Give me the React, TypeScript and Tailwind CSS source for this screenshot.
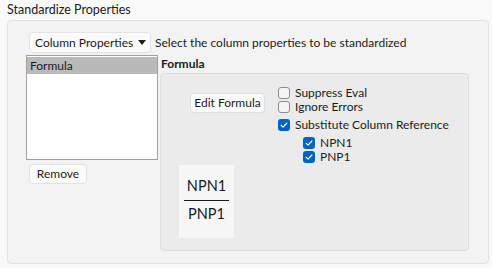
const font = { fontFamily: 'Lato, "Noto Sans", sans-serif' };

function Check({ checked, label, className = '' }: { checked?: boolean; label: string; className?: string }) {
  return (
    <div className={`flex h-[14px] items-center gap-[5px] whitespace-nowrap ${className}`}>
      {checked ? (
        <span className="flex h-[12px] w-[12px] shrink-0 items-center justify-center rounded-[3px] bg-[#0063c4]">
          <svg viewBox="0 0 12 12" className="h-[10px] w-[10px]">
            <path d="M2.5 6.3 L4.9 8.5 L9.5 3.6" fill="none" stroke="white" strokeWidth="1.4" strokeLinecap="round" strokeLinejoin="round" />
          </svg>
        </span>
      ) : (
        <span className="h-[12px] w-[12px] shrink-0 rounded-[3px] border border-[#8c8c8c] bg-[#f4f4f4]" />
      )}
      <span className="text-[12px] leading-[14px] text-[#1b1b1b]">{label}</span>
    </div>
  );
}

export default function App() {
  return (
    <div className="h-[268px] w-[492px] overflow-hidden whitespace-nowrap bg-[#f9f9f9] text-[12px] text-[#1b1b1b]" style={font}>
      {/* Title */}
      <div className="h-[20px] pl-[7px] text-[12.5px] leading-[20px]">Standardize Properties</div>

      {/* Outer panel */}
      <div className="ml-[7px] h-[244px] w-[482px] rounded-[4px] border border-[#e2e2e2] bg-[#f3f3f3]">
        <div className="flex items-center gap-[4px] pl-[21px] pt-[11px]">
          <button className="flex h-[21px] w-[122px] items-center justify-between rounded-[4px] border border-[#e3e3e3] bg-[#fbfbfb] pl-[5px] pr-[4px]">
            Column Properties
            <svg viewBox="0 0 8 5" className="h-[5px] w-[8px]">
              <path d="M0 0 L8 0 L4 5 Z" fill="#1b1b1b" />
            </svg>
          </button>
          <span>Select the column properties to be standardized</span>
        </div>

        <div className="flex pl-[18px] pt-[2px]">
          {/* List column */}
          <div className="flex w-[132px] flex-col">
            <div className="h-[105px] border border-[#a0a0a0] bg-white pt-[1px]">
              <div className="h-[17px] bg-[#b9b9b9] pl-[3px] leading-[17px]">Formula</div>
            </div>
            <button className="ml-[3px] mt-[4px] h-[20px] w-[58px] rounded-[4px] border border-[#e1e1e1] bg-[#fbfbfb] leading-[18px]">
              Remove
            </button>
          </div>

          {/* Right column */}
          <div className="ml-[2px] flex flex-col">
            <div className="h-[18px] pl-[1px] font-bold leading-[18px]">Formula</div>
            <div className="h-[178px] w-[309px] rounded-[4px] border border-[#dedede] bg-[#ebebeb]">
              <div className="flex h-[91px] items-start">
                <button className="ml-[29px] mt-[19px] h-[20px] w-[75px] rounded-[4px] border border-[#e0e0e0] bg-[#fbfbfb] leading-[18px]">
                  Edit Formula
                </button>
                <div className="ml-[13px] mt-[12px] flex flex-col">
                  <Check label="Suppress Eval" />
                  <Check label="Ignore Errors" />
                  <Check checked label="Substitute Column Reference" className="mt-[4px]" />
                  <Check checked label="NPN1" className="ml-[25px] mt-[4px]" />
                  <Check checked label="PNP1" className="ml-[25px]" />
                </div>
              </div>
              <div className="ml-[18px] flex h-[73px] w-[55px] flex-col items-center bg-[#f7f7f7] pt-[12px]">
                <span className="text-[14.5px] leading-[18px]">NPN1</span>
                <div className="mt-[5px] h-[1px] w-[45px] bg-[#1b1b1b]" />
                <span className="mt-[4px] text-[14.5px] leading-[18px]">PNP1</span>
              </div>
            </div>
          </div>
        </div>
      </div>
    </div>
  );
}
